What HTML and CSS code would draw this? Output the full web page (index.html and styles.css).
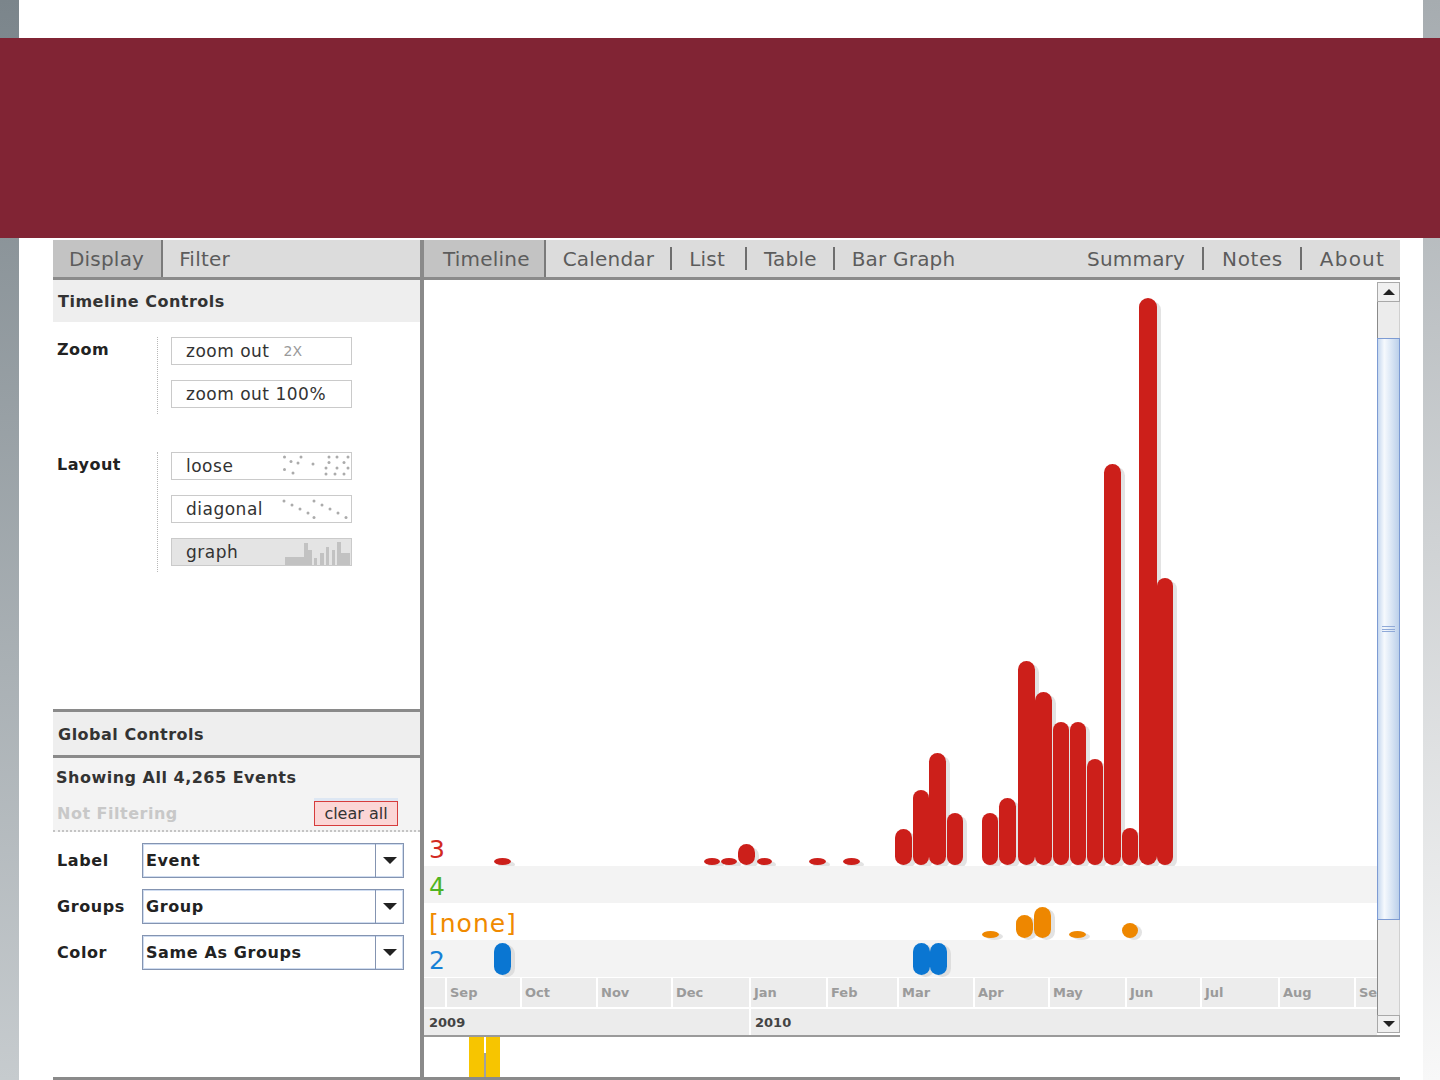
FILE: index.html
```html
<!DOCTYPE html>
<html>
<head>
<meta charset="utf-8">
<title>Timeline</title>
<link rel="stylesheet" href="styles.css">
</head>
<body>
<div class="band"></div>
<div class="app">
  <aside class="left">
    <nav class="tabs">
      <span class="tab active">Display</span>
      <span class="tab">Filter</span>
    </nav>
    <section class="tl-controls">
      <h2 class="sec-head">Timeline Controls</h2>
      <div class="ctrl-group">
        <div class="ctrl-label">Zoom</div>
        <div class="ctrl-btns">
          <div class="btn">zoom out<span class="muted">2X</span></div>
          <div class="btn">zoom out 100%</div>
        </div>
      </div>
      <div class="ctrl-group layout">
        <div class="ctrl-label">Layout</div>
        <div class="ctrl-btns">
          <div class="btn">loose
            <svg class="ico" width="68" height="22" viewBox="0 0 68 22">
              <g fill="#ababab">
                <circle cx="2.5" cy="2" r="1.5"/><circle cx="19" cy="2" r="1.5"/><circle cx="9" cy="6.5" r="1.5"/>
                <circle cx="16" cy="8" r="1.5"/><circle cx="2.5" cy="14.5" r="1.5"/><circle cx="11" cy="18" r="1.5"/>
                <circle cx="31" cy="9" r="1.5"/>
                <circle cx="47" cy="2" r="1.5"/><circle cx="55" cy="2" r="1.5"/><circle cx="47" cy="7.5" r="1.5"/>
                <circle cx="62" cy="7.5" r="1.5"/><circle cx="55" cy="13" r="1.5"/><circle cx="66" cy="13" r="1.5"/>
                <circle cx="44" cy="19" r="1.5"/><circle cx="53" cy="19" r="1.5"/><circle cx="62" cy="19" r="1.5"/>
                <circle cx="44" cy="13" r="1.5"/><circle cx="66" cy="2" r="1.5"/>
              </g>
            </svg>
          </div>
          <div class="btn">diagonal
            <svg class="ico" width="68" height="22" viewBox="0 0 68 22">
              <g fill="#ababab">
                <circle cx="2" cy="3" r="1.5"/><circle cx="10" cy="7" r="1.5"/><circle cx="18" cy="11" r="1.5"/>
                <circle cx="26" cy="15" r="1.5"/><circle cx="32" cy="19.5" r="1.5"/>
                <circle cx="32" cy="3" r="1.5"/><circle cx="40" cy="7" r="1.5"/><circle cx="48" cy="11" r="1.5"/>
                <circle cx="56" cy="15" r="1.5"/><circle cx="64" cy="19.5" r="1.5"/>
              </g>
            </svg>
          </div>
          <div class="btn selected">graph
            <svg class="ico graph-ico" width="66" height="24" viewBox="0 0 66 24">
              <g fill="#c2c2c2">
                <rect x="0" y="16" width="19" height="8"/>
                <rect x="19" y="2" width="4" height="22"/>
                <rect x="23" y="9" width="4" height="15"/>
                <rect x="29" y="17" width="3" height="7"/>
                <rect x="35" y="12" width="4" height="12"/>
                <rect x="41" y="6" width="3" height="18"/>
                <rect x="47" y="9" width="3" height="15"/>
                <rect x="52" y="1" width="4" height="23"/>
                <rect x="56" y="12" width="9" height="12"/>
              </g>
            </svg>
          </div>
        </div>
      </div>
    </section>
    <section class="global">
      <h2 class="sec-head">Global Controls</h2>
      <div class="status">
        <div class="showing">Showing All 4,265 Events</div>
        <div class="filter-row">
          <span class="notfilter">Not Filtering</span>
          <span class="clear">clear all</span>
        </div>
      </div>
      <div class="combos">
        <div class="combo-row">
          <span class="combo-label">Label</span>
          <div class="combo"><span class="combo-val">Event</span><span class="combo-arrow"></span></div>
        </div>
        <div class="combo-row">
          <span class="combo-label">Groups</span>
          <div class="combo"><span class="combo-val">Group</span><span class="combo-arrow"></span></div>
        </div>
        <div class="combo-row">
          <span class="combo-label">Color</span>
          <div class="combo"><span class="combo-val">Same As Groups</span><span class="combo-arrow"></span></div>
        </div>
      </div>
    </section>
  </aside>

  <main class="right">
    <nav class="tabs rtabs">
      <span class="tab active">Timeline</span>
      <span class="tlink">Calendar</span><span class="sep"></span>
      <span class="tlink list">List</span><span class="sep"></span>
      <span class="tlink">Table</span><span class="sep"></span>
      <span class="tlink">Bar Graph</span>
      <span class="rgroup">
        <span class="tlink">Summary</span><span class="sep"></span>
        <span class="tlink notes">Notes</span><span class="sep"></span>
        <span class="tlink last">About</span>
      </span>
    </nav>

    <div class="timeline">
      <div class="tl-main">
        <div class="plot">
          <div class="row row-big">
            <span class="row-label c-red">3</span>
            <svg class="marks" width="953" height="586" viewBox="0 0 953 586">
              <g fill="#e3e3e3" transform="translate(4,3)">
                <rect x="70" y="578" width="17" height="7" rx="8.5"/>
                <rect x="280" y="578" width="16" height="7" rx="8"/>
                <rect x="297" y="578" width="16" height="7" rx="8"/>
                <rect x="314" y="564" width="17" height="21" rx="8.5"/>
                <rect x="333" y="578" width="15" height="7" rx="7.5"/>
                <rect x="385" y="578" width="17" height="7" rx="8.5"/>
                <rect x="419" y="578" width="17" height="7" rx="8.5"/>
                <rect x="471" y="549" width="17" height="36" rx="8.5"/>
                <rect x="489" y="510" width="16" height="75" rx="8"/>
                <rect x="505" y="473" width="17" height="112" rx="8.5"/>
                <rect x="523" y="533" width="16" height="52" rx="8"/>
                <rect x="558" y="533" width="16" height="52" rx="8"/>
                <rect x="575" y="518" width="17" height="67" rx="8.5"/>
                <rect x="594" y="381" width="17" height="204" rx="8.5"/>
                <rect x="611" y="412" width="17" height="173" rx="8.5"/>
                <rect x="629" y="442" width="16" height="143" rx="8"/>
                <rect x="646" y="442" width="16" height="143" rx="8"/>
                <rect x="663" y="479" width="16" height="106" rx="8"/>
                <rect x="680" y="184" width="17" height="401" rx="8.5"/>
                <rect x="698" y="548" width="16" height="37" rx="8"/>
                <rect x="715" y="18" width="18" height="567" rx="9"/>
                <rect x="733" y="298" width="16" height="287" rx="8"/>
              </g>
              <g fill="#cc1f1a">
                <rect x="70" y="578" width="17" height="7" rx="8.5"/>
                <rect x="280" y="578" width="16" height="7" rx="8"/>
                <rect x="297" y="578" width="16" height="7" rx="8"/>
                <rect x="314" y="564" width="17" height="21" rx="8.5"/>
                <rect x="333" y="578" width="15" height="7" rx="7.5"/>
                <rect x="385" y="578" width="17" height="7" rx="8.5"/>
                <rect x="419" y="578" width="17" height="7" rx="8.5"/>
                <rect x="471" y="549" width="17" height="36" rx="8.5"/>
                <rect x="489" y="510" width="16" height="75" rx="8"/>
                <rect x="505" y="473" width="17" height="112" rx="8.5"/>
                <rect x="523" y="533" width="16" height="52" rx="8"/>
                <rect x="558" y="533" width="16" height="52" rx="8"/>
                <rect x="575" y="518" width="17" height="67" rx="8.5"/>
                <rect x="594" y="381" width="17" height="204" rx="8.5"/>
                <rect x="611" y="412" width="17" height="173" rx="8.5"/>
                <rect x="629" y="442" width="16" height="143" rx="8"/>
                <rect x="646" y="442" width="16" height="143" rx="8"/>
                <rect x="663" y="479" width="16" height="106" rx="8"/>
                <rect x="680" y="184" width="17" height="401" rx="8.5"/>
                <rect x="698" y="548" width="16" height="37" rx="8"/>
                <rect x="715" y="18" width="18" height="567" rx="9"/>
                <rect x="733" y="298" width="16" height="287" rx="8"/>
              </g>
            </svg>
          </div>
          <div class="row alt">
            <span class="row-label c-green">4</span>
          </div>
          <div class="row">
            <span class="row-label c-orange">[none]</span>
            <svg class="marks" width="953" height="37" viewBox="0 0 953 37">
              <g fill="#e3e3e3" transform="translate(4,2)">
                <rect x="558" y="28" width="17" height="7" rx="8.5"/>
                <rect x="592" y="12" width="17" height="23" rx="8.5"/>
                <rect x="610" y="4" width="17" height="31" rx="8.5"/>
                <rect x="645" y="28" width="17" height="7" rx="8.5"/>
                <rect x="698" y="20" width="16" height="15" rx="8"/>
              </g>
              <g fill="#ee8700">
                <rect x="558" y="28" width="17" height="7" rx="8.5"/>
                <rect x="592" y="12" width="17" height="23" rx="8.5"/>
                <rect x="610" y="4" width="17" height="31" rx="8.5"/>
                <rect x="645" y="28" width="17" height="7" rx="8.5"/>
                <rect x="698" y="20" width="16" height="15" rx="8"/>
              </g>
            </svg>
          </div>
          <div class="row alt">
            <span class="row-label c-blue">2</span>
            <svg class="marks" width="953" height="37" viewBox="0 0 953 37">
              <g fill="#dedede" transform="translate(4,2)">
                <rect x="70" y="3" width="17" height="32" rx="8.5"/>
                <rect x="489" y="3" width="17" height="32" rx="8.5"/>
                <rect x="506" y="3" width="17" height="32" rx="8.5"/>
              </g>
              <g fill="#0a76d2">
                <rect x="70" y="3" width="17" height="32" rx="8.5"/>
                <rect x="489" y="3" width="17" height="32" rx="8.5"/>
                <rect x="506" y="3" width="17" height="32" rx="8.5"/>
              </g>
            </svg>
          </div>
        </div>
        <div class="months">
          <span class="m"></span>
          <span class="m">Sep</span>
          <span class="m">Oct</span>
          <span class="m">Nov</span>
          <span class="m">Dec</span>
          <span class="m">Jan</span>
          <span class="m">Feb</span>
          <span class="m">Mar</span>
          <span class="m">Apr</span>
          <span class="m">May</span>
          <span class="m">Jun</span>
          <span class="m">Jul</span>
          <span class="m">Aug</span>
          <span class="m">Se</span>
        </div>
        <div class="years">
          <span class="y">2009</span>
          <span class="y">2010</span>
        </div>
      </div>
      <div class="scrollbar">
        <div class="sb-btn up"><span class="tri-up"></span></div>
        <div class="sb-track top"></div>
        <div class="sb-thumb"><span class="grip"></span></div>
        <div class="sb-track bottom"></div>
        <div class="sb-btn down"><span class="tri-down"></span></div>
      </div>
    </div>

    <div class="overview">
      <span class="yb yb1"></span>
      <span class="yb yb2"></span>
      <span class="yline"></span>
    </div>
  </main>
</div>
</body>
</html>
```

FILE: styles.css
```css
* { box-sizing: border-box; margin: 0; padding: 0; }

html, body {
  width: 1440px;
  height: 1080px;
  overflow: hidden;
}

body {
  background:
    linear-gradient(#7b858b, #c6cbce) left top / 19px 100% no-repeat,
    linear-gradient(#a6acb0, #f8f8f8) right top / 17px 100% no-repeat,
    #ffffff;
  font-family: "DejaVu Sans", sans-serif;
  color: #333;
}

.band {
  margin-top: 38px;
  height: 200px;
  background: #812434;
}

.app {
  display: flex;
  margin: 2px 0 0 53px;
  width: 1347px;
  height: 840px;
  border-bottom: 3px solid #8a8a8a;
  background: #fff;
}

/* ---------- tabs ---------- */
.tabs {
  display: flex;
  height: 40px;
  flex: none;
  background: #dcdcdc;
  border-bottom: 3px solid #8b8b8b;
  font-size: 20px;
  color: #5c5c5c;
  letter-spacing: 0.2px;
}

.tab {
  display: flex;
  align-items: center;
  padding: 0 17px 0 16px;
}

.tab.active {
  background: #c3c3c3;
  border-right: 2px solid #7a7a7a;
}

/* ---------- left panel ---------- */
.left {
  width: 371px;
  flex: none;
  display: flex;
  flex-direction: column;
  border-right: 4px solid #8a8a8a;
}

.sec-head {
  height: 42px;
  display: flex;
  align-items: center;
  padding-left: 5px;
  background: #eeeeee;
  font-size: 16px;
  font-weight: bold;
  letter-spacing: 0.5px;
  color: #333;
}

.tl-controls {
  flex: 1;
}

.ctrl-group {
  display: flex;
  margin-top: 15px;
}

.ctrl-group.layout {
  margin-top: 38px;
}

.ctrl-label {
  width: 104px;
  padding: 3px 0 0 4px;
  font-size: 16px;
  font-weight: bold;
  letter-spacing: 0.5px;
  color: #222;
}

.ctrl-btns {
  display: flex;
  flex-direction: column;
  gap: 15px;
  padding: 0 0 6px 13px;
  border-left: 1px dotted #b8b8b8;
}

.btn {
  display: flex;
  align-items: center;
  width: 181px;
  height: 28px;
  padding: 0 1px 0 14px;
  border: 1px solid #cacaca;
  background: #fff;
  font-size: 17px;
  letter-spacing: 0.5px;
  color: #333;
}

.btn.selected {
  background: #e4e4e4;
}

.muted {
  margin-left: 14px;
  font-size: 14px;
  letter-spacing: 0;
  color: #9a9a9a;
}

.ico {
  margin-left: auto;
  display: block;
}

.graph-ico {
  align-self: flex-end;
  margin-right: -1px;
}

/* ---------- global controls ---------- */
.global {
  flex: none;
  height: 368px;
  border-top: 3px solid #8a8a8a;
}

.global .sec-head {
  height: 46px;
  padding-top: 2px;
  border-bottom: 3px solid #8a8a8a;
}

.status {
  height: 74px;
  padding: 10px 22px 0 3px;
  background: #f3f3f3;
  border-bottom: 2px dotted #c4c4c4;
}

.showing {
  line-height: 20px;
  font-size: 16px;
  font-weight: bold;
  letter-spacing: 0.5px;
  color: #333;
}

.filter-row {
  display: flex;
  justify-content: space-between;
  align-items: center;
  margin-top: 13px;
}

.notfilter {
  padding-left: 1px;
  font-size: 16px;
  font-weight: bold;
  letter-spacing: 0.5px;
  color: #c8c8c8;
}

.clear {
  display: flex;
  align-items: center;
  justify-content: center;
  width: 84px;
  height: 25px;
  border: 1px solid #d63c3c;
  background: #fbd6d6;
  box-shadow: 0 -3px 0 #dde7f3;
  font-size: 16px;
  color: #333;
}

.combos {
  padding: 11px 0 0 4px;
}

.combo-row {
  display: flex;
  align-items: center;
  height: 35px;
  margin-bottom: 11px;
}

.combo-label {
  width: 85px;
  font-size: 16px;
  font-weight: bold;
  letter-spacing: 0.6px;
  color: #222;
}

.combo {
  display: flex;
  width: 262px;
  height: 35px;
  border: 1px solid #8494b1;
  box-shadow: inset 0 0 0 1px #cfdcf0;
  background: #fff;
}

.combo-val {
  flex: 1;
  display: flex;
  align-items: center;
  padding-left: 3px;
  font-size: 16px;
  font-weight: bold;
  letter-spacing: 0.6px;
  color: #222;
}

.combo-arrow {
  width: 28px;
  border-left: 1px solid #8494b1;
  display: flex;
  align-items: center;
  justify-content: center;
}

.combo-arrow::after {
  content: "";
  border-left: 7px solid transparent;
  border-right: 7px solid transparent;
  border-top: 7px solid #222;
}

/* ---------- right panel ---------- */
.right {
  flex: 1;
  display: flex;
  flex-direction: column;
}

.rtabs .tab.active {
  padding: 0 14px 0 19px;
}

.tlink {
  display: flex;
  align-items: center;
  padding: 0 16px 0 17px;
}

.tlink.list {
  padding-right: 20px;
}

.sep {
  align-self: center;
  width: 2px;
  height: 23px;
  background: #6e6e6e;
}

.rgroup {
  display: flex;
  margin-left: auto;
}

.rgroup .tlink {
  padding: 0 17px 0 18px;
}

.rgroup .tlink.notes {
  letter-spacing: 0.6px;
}

.rgroup .tlink.last {
  padding-right: 15px;
  letter-spacing: 1.2px;
}

.timeline {
  display: flex;
  height: 757px;
  flex: none;
  border-bottom: 2px solid #9a9a9a;
}

.tl-main {
  flex: 1;
  display: flex;
  flex-direction: column;
  overflow: hidden;
}

.plot {
  display: flex;
  flex-direction: column;
}

.row {
  position: relative;
  height: 37px;
  display: flex;
  align-items: flex-end;
}

.row-big {
  height: 586px;
}

.row.alt {
  background: #f3f3f3;
}

.row-label {
  position: relative;
  z-index: 1;
  padding: 0 0 4px 5px;
  font-size: 25px;
  line-height: 25px;
  letter-spacing: 1px;
}

.c-red { color: #d22a22; }
.c-green { color: #4fb423; }
.c-orange { color: #f08a00; }
.c-blue { color: #1780d6; }

.marks {
  position: absolute;
  left: 0;
  top: 0;
}

.months {
  display: grid;
  grid-template-columns: 21px 75px 76px 75px 78px 77px 71px 76px 75px 77px 75px 78px 76px 1fr;
  height: 30px;
  border-top: 1px solid #fff;
  background: #ececec;
}

.m {
  display: flex;
  align-items: center;
  padding-left: 3px;
  border-left: 2px solid #fff;
  font-size: 13px;
  font-weight: bold;
  color: #9b9b9b;
  white-space: nowrap;
  overflow: hidden;
}

.m:first-child {
  border-left: none;
}

.years {
  display: grid;
  grid-template-columns: 325px 1fr;
  height: 28px;
  border-top: 2px solid #fff;
  background: #ececec;
}

.y {
  display: flex;
  align-items: center;
  padding-left: 5px;
  font-size: 13px;
  font-weight: bold;
  color: #444;
}

.y + .y {
  border-left: 2px solid #fff;
  padding-left: 4px;
}

/* ---------- scrollbar ---------- */
.scrollbar {
  width: 23px;
  flex: none;
  display: flex;
  flex-direction: column;
  padding: 2px 0;
}

.sb-btn {
  display: flex;
  align-items: center;
  justify-content: center;
  background: #f0f0f0;
  border: 1px solid #a9a9a9;
}

.sb-btn.up { height: 20px; }
.sb-btn.down { height: 18px; }

.tri-up {
  border-left: 6px solid transparent;
  border-right: 6px solid transparent;
  border-bottom: 6px solid #222;
}

.tri-down {
  border-left: 6px solid transparent;
  border-right: 6px solid transparent;
  border-top: 6px solid #222;
}

.sb-track {
  background: #ececec;
  border-left: 1px solid #8a8a8a;
  border-right: 1px solid #d0d0d0;
}

.sb-track.top { height: 36px; }
.sb-track.bottom { height: 95px; }

.sb-thumb {
  height: 582px;
  display: flex;
  align-items: center;
  justify-content: center;
  border: 1px solid #7d9bd3;
  background: linear-gradient(to right, #c6d8ef 0%, #f6f9fd 30%, #e1ebf7 55%, #bcd0ea 100%);
}

.grip {
  width: 13px;
  height: 6px;
  border-top: 1px solid #8fa9d8;
  border-bottom: 1px solid #8fa9d8;
  position: relative;
}

.grip::after {
  content: "";
  position: absolute;
  left: 0;
  right: 0;
  top: 1.5px;
  border-top: 1px solid #8fa9d8;
}

/* ---------- overview strip ---------- */
.overview {
  position: relative;
  flex: 1;
  background: #fff;
}

.yb {
  position: absolute;
  top: 0;
  bottom: 0;
  background: #f7c500;
}

.yb1 { left: 45px; width: 15px; }
.yb2 { left: 62px; width: 14px; }

.yline {
  position: absolute;
  left: 60px;
  width: 2px;
  top: 16px;
  bottom: 0;
  background: #a0a0a0;
}
```
